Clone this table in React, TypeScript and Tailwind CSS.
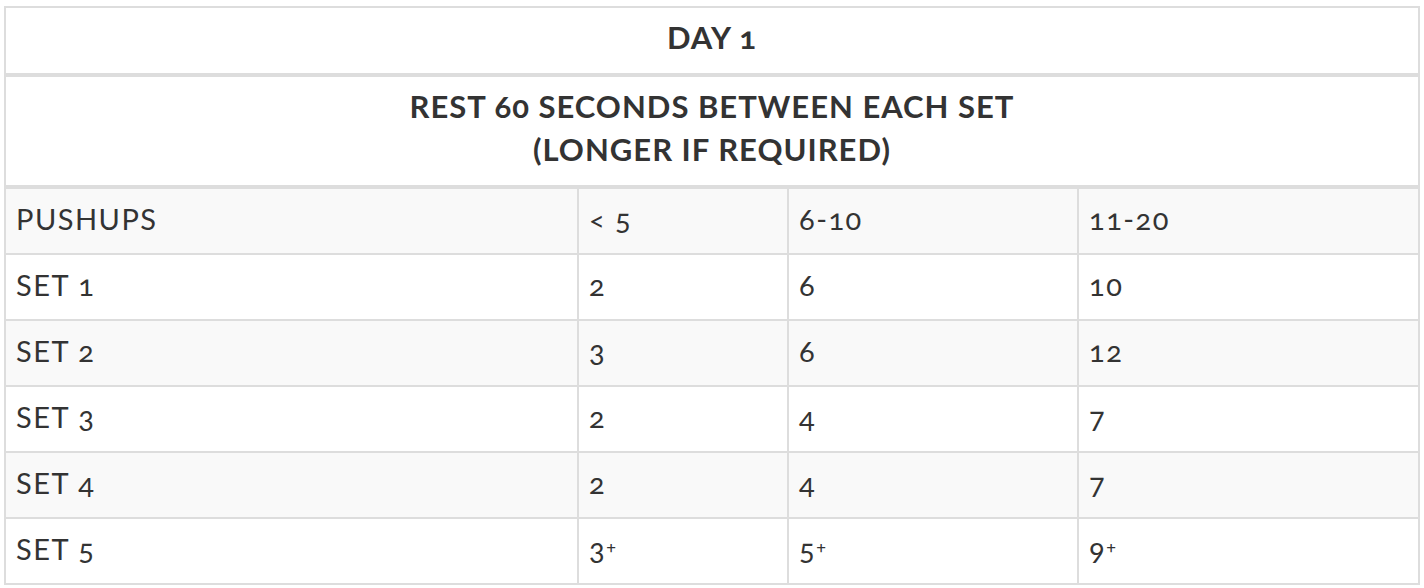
const rows = [
  { label: 'SET 1', a: '2', b: '6', c: '10' },
  { label: 'SET 2', a: '3', b: '6', c: '12' },
  { label: 'SET 3', a: '2', b: '4', c: '7' },
  { label: 'SET 4', a: '2', b: '4', c: '7' },
  { label: 'SET 5', a: '3', b: '5', c: '9', plus: true },
];

function Val({ v, plus }: { v: string; plus?: boolean }) {
  return (
    <>
      {v}
      {plus && <sup className="text-[18px] relative -top-[7px] tracking-normal">+</sup>}
    </>
  );
}

export default function App() {
  const cell = 'border-2 border-[#dddddd] pl-[10px] pr-3 pt-[10px] pb-[14px] leading-[40px] text-left align-top';
  const head = 'border-2 border-b-4 border-[#dddddd] px-3 pt-[8px] pb-[14px] text-[31px] leading-[43px] font-bold text-center tracking-[1px]';
  return (
    <div className="bg-white min-h-screen px-1 pt-[6px] text-[#333333]" style={{ fontFamily: 'Lato, "Open Sans", sans-serif' }}>
      <table className="w-[1416px] border-collapse table-fixed oldstyle-nums">
        <colgroup>
          <col className="w-[573px]" />
          <col className="w-[210px]" />
          <col className="w-[290px]" />
          <col />
        </colgroup>
        <thead>
          <tr>
            <th colSpan={4} className={head}>
              DAY 1
            </th>
          </tr>
          <tr>
            <th colSpan={4} className={head}>
              REST 60 SECONDS BETWEEN EACH SET
              <br />
              (LONGER IF REQUIRED)
            </th>
          </tr>
        </thead>
        <tbody className="text-[29px] font-normal tracking-[1.5px]">
          <tr className="bg-[#f9f9f9]">
            <td className={cell}>PUSHUPS</td>
            <td className={cell}>&lt; 5</td>
            <td className={cell}>6-10</td>
            <td className={cell}>11-20</td>
          </tr>
          {rows.map((r, i) => (
            <tr key={r.label} className={i % 2 === 1 ? 'bg-[#f9f9f9]' : 'bg-white'}>
              <td className={cell}>{r.label}</td>
              <td className={cell}><Val v={r.a} plus={r.plus} /></td>
              <td className={cell}><Val v={r.b} plus={r.plus} /></td>
              <td className={cell}><Val v={r.c} plus={r.plus} /></td>
            </tr>
          ))}
        </tbody>
      </table>
    </div>
  );
}
